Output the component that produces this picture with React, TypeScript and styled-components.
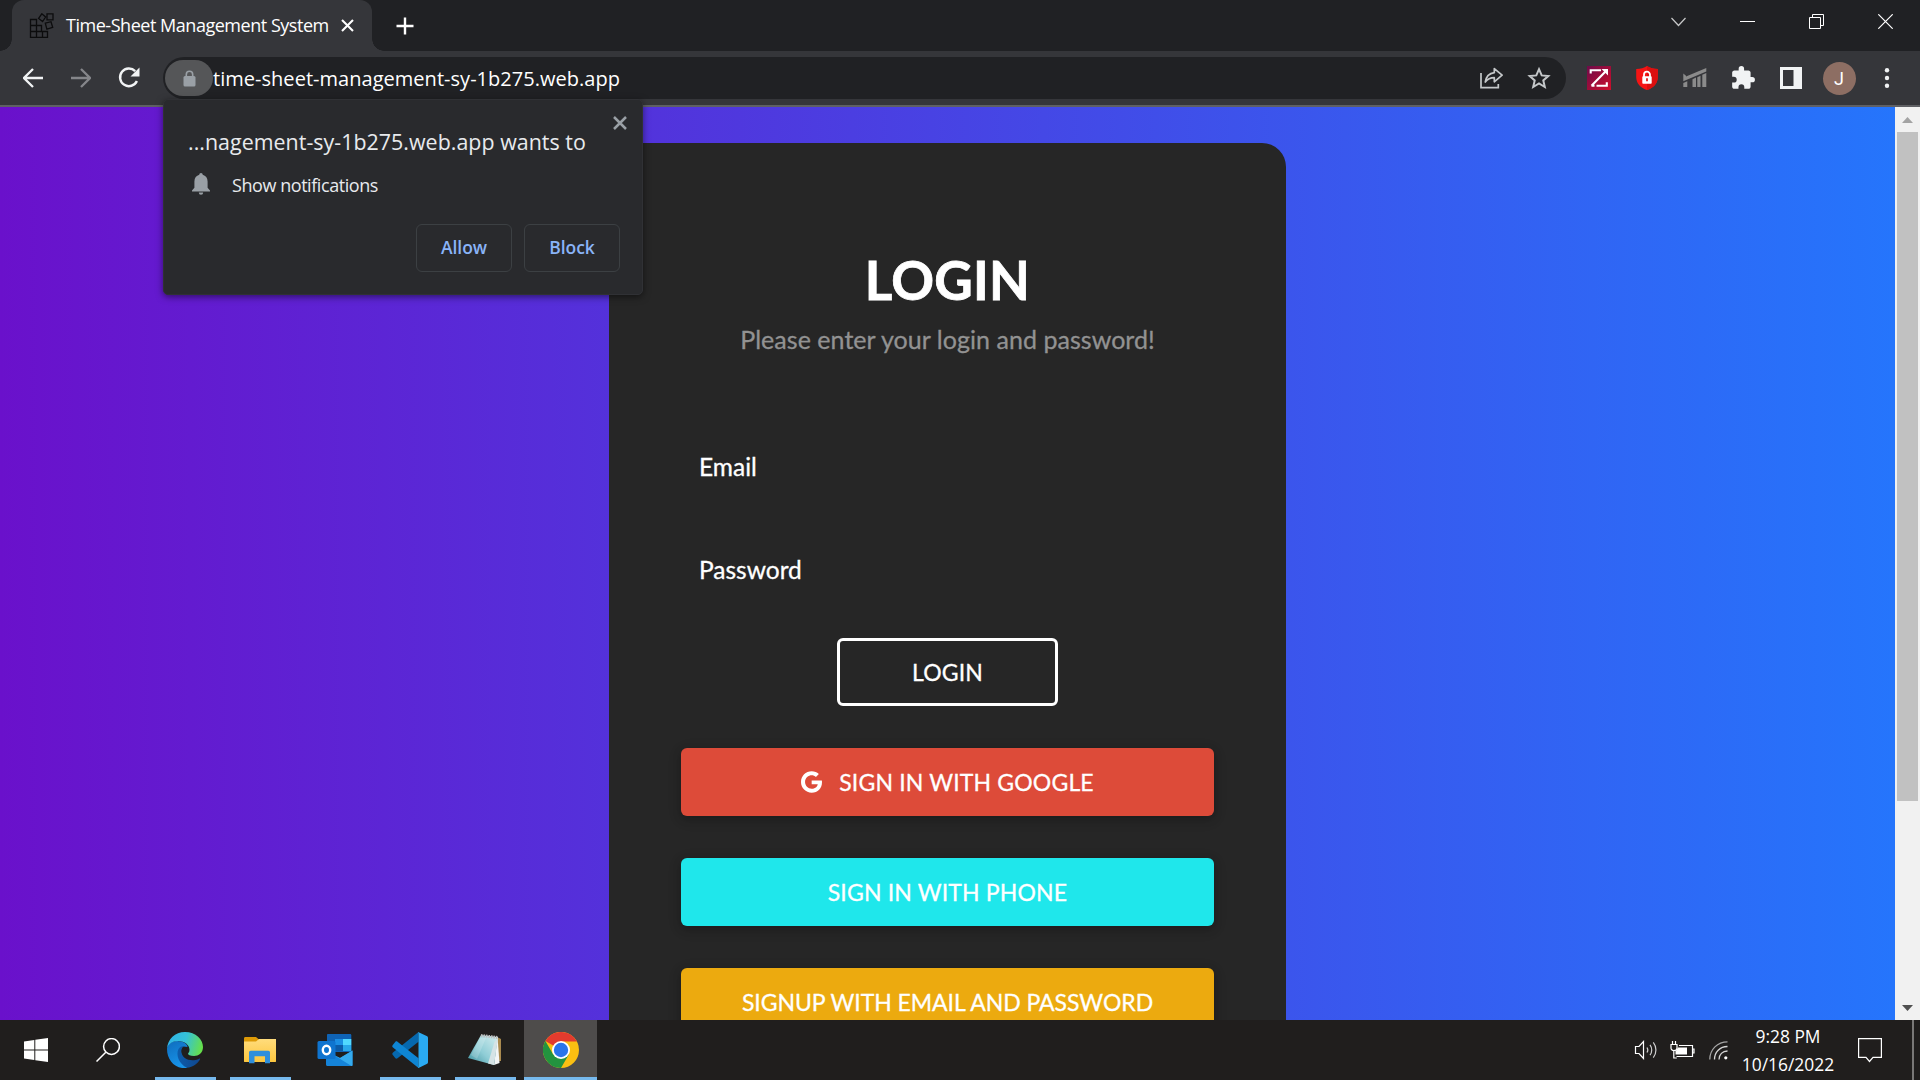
import React from 'react';
import styled, { createGlobalStyle } from 'styled-components';

const ui = '"Segoe UI", "Open Sans", "Noto Sans", sans-serif';
const comic = '"Comic Sans MS", Lato, "Open Sans", sans-serif';

const Global = createGlobalStyle`
  * { box-sizing: border-box; }
  html, body { margin: 0; padding: 0; overflow: hidden; background: #202124; }
  svg { display: block; flex: none; }
  button { margin: 0; padding: 0; font: inherit; }
`;

const Screen = styled.div`
  position: relative;
  display: flex;
  flex-direction: column;
  width: 1920px;
  height: 1080px;
  overflow: hidden;
  font-family: ${ui};
`;

/* ---------- browser frame ---------- */

const TabStrip = styled.header`
  display: flex;
  height: 51px;
  padding-left: 12px;
  background: #202124;
`;

const Tab = styled.div`
  position: relative;
  display: flex;
  align-items: center;
  width: 360px;
  height: 51px;
  padding: 0 17px;
  background: #35363a;
  border-radius: 12px 12px 0 0;
  &::before, &::after {
    content: '';
    position: absolute;
    bottom: 0;
    width: 12px;
    height: 12px;
  }
  &::before {
    left: -12px;
    background: radial-gradient(circle at 0 0, transparent 11.5px, #35363a 12px);
  }
  &::after {
    right: -12px;
    background: radial-gradient(circle at 100% 0, transparent 11.5px, #35363a 12px);
  }
`;

const TabTitle = styled.span`
  width: 275px;
  margin-left: 12px;
  padding-bottom: 1px;
  color: #fff;
  font-size: 18px;
  line-height: 24px;
  letter-spacing: -0.47px;
  white-space: nowrap;
`;

const NewTab = styled.div`
  display: flex;
  align-items: center;
  margin-left: 24px;
`;

const WindowControls = styled.div`
  display: flex;
  height: 43px;
  margin-left: auto;
`;

const WindowButton = styled.div`
  display: grid;
  place-items: center;
  width: 69px;
`;

const Toolbar = styled.div`
  display: flex;
  align-items: center;
  height: 56px;
  padding-left: 9px;
  background: #35363a;
  border-bottom: 2px solid #5f6064;
`;

const ToolSlot = styled.div`
  display: grid;
  place-items: center;
  width: 48px;
  height: 42px;
`;

const Omnibox = styled.div`
  display: flex;
  align-items: center;
  width: 1403px;
  height: 42px;
  margin: 0 9px 0 10px;
  padding: 0 3px 0 2px;
  background: #202124;
  border-radius: 21px;
`;

const SiteChip = styled.div`
  display: grid;
  place-items: center;
  width: 48px;
  height: 36px;
  border-radius: 18px;
  background: #555658;
`;

const Url = styled.span`
  flex: 1;
  padding-top: 1px;
  color: #fff;
  font-size: 20px;
  line-height: 26px;
  letter-spacing: 0.03px;
`;

const Avatar = styled.div`
  display: grid;
  place-items: center;
  width: 33px;
  height: 33px;
  border-radius: 50%;
  background: #8d6e63;
  color: #fff;
  font: 18px/33px Roboto, sans-serif;
`;

/* ---------- permission bubble ---------- */

const Bubble = styled.div`
  position: absolute;
  left: 163px;
  top: 99px;
  width: 480px;
  height: 196px;
  display: flex;
  flex-direction: column;
  padding: 29px 22px 22px 24px;
  background: #292a2d;
  border: 1px solid #303135;
  border-radius: 5px;
  box-shadow: 0 2px 7px rgba(0, 0, 0, 0.5);
`;

const BubbleClose = styled.div`
  position: absolute;
  top: 16px;
  right: 15px;
`;

const BubbleTitle = styled.div`
  color: #e8eaed;
  font-size: 21.4px;
  line-height: 26px;
  letter-spacing: 0.03px;
  white-space: nowrap;
`;

const BubbleRow = styled.div`
  display: flex;
  align-items: center;
  gap: 22px;
  margin-top: 16px;
  padding-left: 4px;
  color: #e8eaed;
  font-size: 18px;
  line-height: 24px;
  letter-spacing: -0.44px;
  & > span {
    padding-top: 2px;
  }
`;

const BubbleActions = styled.div`
  display: flex;
  justify-content: flex-end;
  gap: 12px;
  margin-top: auto;
`;

const BubbleButton = styled.button`
  width: 96px;
  height: 48px;
  padding-bottom: 2px;
  background: transparent;
  border: 1px solid #3c4043;
  border-radius: 6px;
  color: #8ab4f8;
  font-family: ${ui};
  font-size: 17.5px;
  font-weight: 600;
  letter-spacing: -0.1px;
`;

/* ---------- page ---------- */

const Viewport = styled.main`
  display: flex;
  height: 913px;
`;

const Page = styled.div`
  flex: 1;
  display: flex;
  justify-content: center;
  padding-top: 36px;
  overflow: hidden;
  background: linear-gradient(to right, #6a11cb, #2575fc);
  font-family: ${comic};
`;

const Card = styled.section`
  display: flex;
  flex-direction: column;
  align-items: center;
  flex: none;
  width: 677px;
  height: 1100px;
  padding: 105px 72px 0;
  background: #262626;
  border-radius: 24px;
  color: #fff;
  -webkit-text-stroke: 0.3px;
`;

const Title = styled.h2`
  margin: 0;
  font-size: 53px;
  line-height: 64px;
  font-weight: 700;
  letter-spacing: 0.3px;
  -webkit-text-stroke: 0.8px;
`;

const Hint = styled.p`
  margin: 11px 0 0;
  color: #929292;
  font-size: 25px;
  line-height: 32px;
  letter-spacing: 0.04px;
`;

const Field = styled.label<{ $gap: number }>`
  align-self: stretch;
  margin-top: ${(p) => p.$gap}px;
  padding-left: 18px;
  font-size: 24.5px;
  line-height: 32px;
`;

const Button = styled.button<{ $tone?: string }>`
  display: flex;
  align-items: center;
  justify-content: center;
  gap: 17px;
  flex: none;
  width: ${(p) => (p.$tone ? '533px' : '221px')};
  height: 68px;
  margin-top: 42px;
  background: ${(p) => p.$tone ?? 'transparent'};
  border: ${(p) => (p.$tone ? 'none' : '3px solid #fff')};
  border-radius: 6px;
  box-shadow: ${(p) => (p.$tone ? '0 3px 8px rgba(0,0,0,.2), 0 3px 15px rgba(0,0,0,.1)' : 'none')};
  color: #fff;
  font-family: ${comic};
  font-size: 23px;
  line-height: 32px;
  letter-spacing: ${(p) => (p.$tone === '#ecaa0f' ? '-0.05px' : '0.16px')};
  -webkit-text-stroke: 0.3px;
  white-space: nowrap;
`;

const LoginButton = styled(Button)`
  margin-top: 52px;
`;

const Scrollbar = styled.div`
  display: flex;
  flex-direction: column;
  align-items: center;
  width: 25px;
  background: #f1f1f1;
`;

const ScrollArrow = styled.div`
  display: grid;
  place-items: center;
  height: 25px;
`;

const Thumb = styled.div`
  width: 21px;
  height: 669px;
  margin-bottom: auto;
  background: #c1c1c1;
`;

/* ---------- taskbar ---------- */

const Taskbar = styled.footer`
  display: flex;
  height: 60px;
  background: #201e1d;
  color: #fff;
`;

const StartSlot = styled.div`
  display: grid;
  place-items: center;
  width: 72px;
`;

const Apps = styled.div`
  display: flex;
  gap: 2px;
  margin-left: 5px;
`;

const AppSlot = styled.div<{ $open?: boolean; $active?: boolean }>`
  display: flex;
  flex-direction: column;
  align-items: center;
  justify-content: space-between;
  width: 73px;
  padding-top: 12px;
  background: ${(p) => (p.$active ? '#4e4c4b' : 'transparent')};
  & > svg {
    margin-right: ${(p) => (p.$active ? '0' : '1px')};
  }
  &::after {
    content: '';
    width: ${(p) => (p.$active ? '73px' : '61px')};
    height: 3px;
    background: ${(p) => (p.$open || p.$active ? '#76b9ed' : 'transparent')};
  }
`;

const Tray = styled.div`
  display: flex;
  margin-left: auto;
`;

const TraySlot = styled.div<{ $w: number }>`
  display: grid;
  place-items: center;
  width: ${(p) => p.$w}px;
`;

const Clock = styled.div`
  display: flex;
  flex-direction: column;
  align-items: center;
  width: 103px;
  padding: 2px 1px 0 0;
  font-size: 17.4px;
  line-height: 28px;
`;

const ShowDesktop = styled.div`
  width: 8px;
  margin-left: 12px;
  border-left: 2px solid #797877;
`;

/* ---------- icons ---------- */

const Favicon = () => (
  <svg width="25" height="25" viewBox="0 0 25 25" fill="none" stroke="#0c0c0d" strokeWidth="1.3">
    <path d="M1.500 6.500h6v6h5v6h6v6h-17zM1.500 12.500h6v12M1.500 18.500h12v6" />
    <path d="M12.800.8l3.800 3.200-3 4.600-4-3.200zM18 .9h6v6h-6zM16.300 10.200l5.700-1.500 1.700 5.600-5.800 1.800z" />
  </svg>
);
const TabClose = () => (
  <svg width="13" height="13" viewBox="0 0 13 13" stroke="#fff" strokeWidth="2.1">
    <path d="M1 1l11 11M12 1L1 12" />
  </svg>
);
const Plus = () => (
  <svg width="18" height="18" viewBox="0 0 18 18" stroke="#fff" strokeWidth="2.4">
    <path d="M9 .5v17M.5 9h17" />
  </svg>
);
const ChevronDown = () => (
  <svg width="15" height="15" viewBox="0 0 15 15" fill="none" stroke="#c8c9ca" strokeWidth="1.2">
    <path d="M.5 4L7.5 11.500L14.5 4" />
  </svg>
);
const Minimize = () => (
  <svg width="15" height="15" viewBox="0 0 15 15">
    <path d="M0 7h15v1H0z" fill="#fff" />
  </svg>
);
const Restore = () => (
  <svg width="15" height="15" viewBox="0 0 15 15" fill="none" stroke="#fff">
    <path d="M.5 3.5h11v11H.5zM3.5 3.5v-3h11v11h-3" />
  </svg>
);
const Close = () => (
  <svg width="15" height="15" viewBox="0 0 15 15" stroke="#fff" strokeWidth="1.2">
    <path d="M.3.3l14.4 14.4M14.7.3L.3 14.7" />
  </svg>
);
const Arrow = ({ color, flip }: { color: string; flip?: boolean }) => (
  <svg width="20" height="20" viewBox="0 0 20 20" fill="none" stroke={color} strokeWidth="2.3">
    <path d={flip ? 'M0 10h18M10 1l9 9-9 9' : 'M20 10H2M10 1l-9 9 9 9'} />
  </svg>
);
const Reload = () => (
  <svg width="22" height="22" viewBox="0 0 22 22" fill="none">
    <path d="M17.2 4.2A8.8 8.8 0 1 0 18.9 14" stroke="#f1f3f4" strokeWidth="2.4" />
    <path d="M21.5 .5v9h-9z" fill="#f1f3f4" />
  </svg>
);
const Lock = () => (
  <svg width="13" height="17" viewBox="0 0 13 17">
    <path d="M3.3 7V4.4a3.2 3.2 0 0 1 6.4 0V7" fill="none" stroke="#9aa0a6" strokeWidth="1.6" />
    <rect x=".5" y="6" width="12" height="10.5" rx="1.5" fill="#9aa0a6" />
  </svg>
);
const Share = () => (
  <svg width="24" height="22" viewBox="-1 0 24 22" fill="none" stroke="#c4c7c9" strokeWidth="1.7">
    <path d="M1 6v14.7h17.3V17" />
    <path d="M14.3 1.6l7.800 6.600-7.800 6.600v-4.100c-4 0-6.700 1.300-9 4.300.8-5 3.800-8.600 9-9.300z" strokeLinejoin="round" />
  </svg>
);
const Star = () => (
  <svg width="24" height="24" viewBox="0 0 24 24" fill="none" stroke="#c4c7c9" strokeWidth="2">
    <path d="M12 3.200l2.700 6.200 6.600.6-5 4.400 1.500 6.600-5.800-3.500L6.200 21l1.500-6.600-5-4.400 6.600-.6z" />
  </svg>
);
const ZoomExt = () => (
  <svg width="24" height="24" viewBox="0 0 24 24">
    <defs>
      <linearGradient id="ze" x1="0" y1="0" x2="1" y2="1">
        <stop offset="0" stopColor="#6d0b4a" />
        <stop offset="1" stopColor="#cf0f2a" />
      </linearGradient>
    </defs>
    <path d="M0 0h24v24H0z" fill="url(#ze)" />
    <path d="M3.700 7.500V4.200H14M4.500 19.700L19 5M9.500 19.700h10.300v-3.500M4.500 19.700h3" fill="none" stroke="#fff" strokeWidth="2.100" />
    <path d="M14.500 3h6.500v6.500z" fill="#fff" />
  </svg>
);
const Shield = () => (
  <svg width="22" height="24" viewBox="0 0 22 24">
    <path d="M11 0c2.800 2 6.500 3 10.800 3v8c0 6.500-4.500 11-10.800 13C4.700 22 .2 17.500.2 11V3C4.500 3 8.200 2 11 0z" fill="#f51414" />
    <path d="M11 0c2.800 2 6.500 3 10.800 3v8c0 6.500-4.500 11-10.800 13z" fill="#dc0f0f" />
    <path d="M8 11V8.700a3 3 0 0 1 6 0V11" fill="none" stroke="#fff" strokeWidth="1.800" />
    <rect x="6.300" y="10.300" width="9.400" height="7.500" rx=".8" fill="#fff" />
    <path d="M11 12.300v3" stroke="#e01010" strokeWidth="1.700" />
  </svg>
);
const ChartExt = () => (
  <svg width="24" height="20" viewBox="0 0 24 20" fill="#8b8b8b">
    <path d="M.3 5.500L3 7.700v.9L23.300 0v3.600L.3 13.300z" />
    <path d="M.3 15l4-1.800V19h-4zM9.500 11.200l3.500-1.600V19H9.500zM14.300 9.200l3.200-1.500V19h-3.200zM19.300 6.800L23.300 5v14h-4z" />
  </svg>
);
const Puzzle = () => (
  <svg width="26" height="26" viewBox="0 0 24 24" fill="#f1f3f4">
    <path d="M20.500 11H19V7c0-1.100-.9-2-2-2h-4V3.500a2.500 2.500 0 0 0-5 0V5H4c-1.100 0-2 .9-2 2v3.800h1.500a2.700 2.700 0 0 1 0 5.400H2V20c0 1.100.9 2 2 2h3.800v-1.500a2.700 2.700 0 0 1 5.400 0V22H17c1.100 0 2-.9 2-2v-4h1.500a2.500 2.500 0 0 0 0-5z" />
  </svg>
);
const SidePanel = () => (
  <svg width="22" height="22" viewBox="0 0 22 22">
    <path fillRule="evenodd" d="M0 0h22v22H0zM3 3v16h10.500V3z" fill="#f1f3f4" />
  </svg>
);
const Dots = () => (
  <svg width="6" height="20" viewBox="0 0 6 20" fill="#f1f3f4">
    <circle cx="3" cy="2.200" r="2.200" />
    <circle cx="3" cy="10" r="2.200" />
    <circle cx="3" cy="17.800" r="2.200" />
  </svg>
);
const BubbleX = () => (
  <svg width="14" height="14" viewBox="0 0 14 14" stroke="#9aa0a6" strokeWidth="2.500">
    <path d="M1 1l12 12M13 1L1 13" />
  </svg>
);
const Bell = () => (
  <svg width="18" height="22" viewBox="0 0 18 22" fill="#9aa0a6">
    <path d="M9 0c1 0 1.700.7 1.700 1.800C13.700 2.600 15.600 5 15.600 8.400v6.300L18 17.400v1H0v-1l2.400-2.700V8.400C2.400 5 4.300 2.600 7.300 1.800 7.300.7 8 0 9 0zM6.800 19.600h4.400a2.200 2.200 0 0 1-4.400 0z" />
  </svg>
);
const GoogleG = () => (
  <svg width="21" height="22" viewBox="0 0 488 496" fill="#fff">
    <path d="M488 253.800C488 395.300 391.100 496 248 496 110.800 496 0 385.200 0 248S110.800 0 248 0c66.800 0 123 24.500 166.300 64.900l-67.500 64.900C258.500 44.600 94.300 108.600 94.300 248c0 86.500 69.100 156.600 153.700 156.600 98.200 0 135-70.400 140.800-106.900H248v-85.300h236.100c2.300 12.700 3.900 24.900 3.900 41.400z" />
  </svg>
);
const Triangle = ({ up }: { up?: boolean }) => (
  <svg width="11" height="6" viewBox="0 0 11 6">
    <path d={up ? 'M0 6L5.500 0 11 6z' : 'M0 0h11L5.500 6z'} fill={up ? '#a3a3a3' : '#505050'} />
  </svg>
);
const Windows = () => (
  <svg width="24" height="24" viewBox="0 0 24 24" fill="#fff">
    <path d="M0 3.500L10.300 2v9.500H0zM11.300 1.800L24 0v11.500H11.300zM0 12.500h10.300V22L0 20.500zM11.300 12.500H24V24l-12.700-1.800z" />
  </svg>
);
const Search = () => (
  <svg width="24" height="24" viewBox="0 0 24 24" fill="none" stroke="#fff" strokeWidth="1.500">
    <circle cx="15.500" cy="8.500" r="7.900" />
    <path d="M9.800 14.200L.5 23.500" />
  </svg>
);
const Edge = () => (
  <svg width="36" height="36" viewBox="0 0 36 36">
    <defs>
      <linearGradient id="eg" x1="0" y1=".3" x2="1" y2=".5">
        <stop offset="0" stopColor="#2fb4e8" />
        <stop offset=".5" stopColor="#35c1d8" />
        <stop offset="1" stopColor="#66e04a" />
      </linearGradient>
      <linearGradient id="eb" x1="0" y1="0" x2=".4" y2="1">
        <stop offset="0" stopColor="#0f6cbd" />
        <stop offset="1" stopColor="#1793e8" />
      </linearGradient>
      <linearGradient id="ed" x1="0" y1="0" x2="1" y2="0">
        <stop offset="0" stopColor="#0d5cab" />
        <stop offset="1" stopColor="#10468c" />
      </linearGradient>
    </defs>
    <path d="M0 17C.3 13 4 9 10 9c7 0 10.500 3.500 10.500 6l-4-.5c-2 1-3 3.500-2.500 6.500L20 36C8 37.500 0 28 0 17z" fill="url(#eb)" />
    <path d="M11.500 17c-3 6 .5 15 8.500 18.800 6-.8 10.500-4 13-8.300.4-.8-.2-1.200-.9-.8C24 30.500 15 27 14.300 19.500c-.2-2.500 1-4.700 2.700-5.500-2.300 0-4.300 1-5.500 3z" fill="url(#ed)" />
    <path d="M0 17C.5 7 8 0 18 0c11 0 18 7.500 18 15 0 6-4.500 9-9 9-4 0-6-1.300-6-2.300 0-.8 1.500-1.200 1.500-4C22.500 13 17.500 9 11.500 9 5 9 .8 12.500 0 17z" fill="url(#eg)" />
  </svg>
);
const Explorer = () => (
  <svg width="32" height="36" viewBox="0 0 32 36">
    <defs>
      <linearGradient id="fx" x1="0" y1="0" x2="0" y2="1">
        <stop offset="0" stopColor="#ffdc7c" />
        <stop offset="1" stopColor="#fcc63e" />
      </linearGradient>
    </defs>
    <path d="M0 6.500C0 5.500.5 5 1.500 5H12l3 2.500V12H0z" fill="#dd9a07" />
    <path d="M0 9.500h12L15 7h17v22.500c0 .3-.2.500-.500.500H.5c-.3 0-.5-.2-.5-.500z" fill="url(#fx)" />
    <path d="M5 31.300V20.500c0-1 .7-1.700 1.700-1.700h17.600c1 0 1.700.7 1.700 1.700v10.800h-5v-7H10.500v7z" fill="#2f8fdc" />
  </svg>
);
const Outlook = () => (
  <svg width="36" height="36" viewBox="0 0 36 36">
    <path d="M11 2h22c.8 0 1.300.5 1.300 1.300V20H10V3.300C10 2.500 10.300 2 11 2z" fill="#0f63b5" />
    <path d="M18 7h8v6h-8z" fill="#1b8ee3" />
    <path d="M26 7h8.300v6H26z" fill="#50d9ff" />
    <path d="M18 13h8v6h-8z" fill="#0b5ba8" />
    <path d="M26 13h8.300v6H26z" fill="#28a8ea" />
    <path d="M9 19l14 7 12.500-7.500V33c0 .6-.4 1-1 1h-24c-.9 0-1.500-.6-1.500-1.500z" fill="#1583d8" />
    <path d="M35.500 18.500V33c0 .6-.4 1-1 1L16 22.500l7 3.500z" fill="#35abee" />
    <rect x=".5" y="9" width="18" height="18" rx="1.500" fill="#0f74cf" />
    <ellipse cx="9.500" cy="18" rx="3.700" ry="4.200" fill="none" stroke="#fff" strokeWidth="2.400" />
  </svg>
);
const VsCode = () => (
  <svg width="36" height="36" viewBox="0 0 36 36">
    <path d="M1 23.200c-1-1-.9-2 0-2.800L26.500 0v9.800L5.500 26.300c-.6.500-1.500.5-2.100 0z" fill="#0668ae" />
    <path d="M1 12.800c-1 1-.9 2 0 2.800L26.500 36v-9.800L5.500 9.700c-.6-.5-1.500-.5-2.100 0z" fill="#0e85d3" />
    <path d="M26 0l8.700 4c.8.400 1.300 1.100 1.300 2v24c0 .9-.5 1.600-1.300 2L26.500 36c-.6-.5-.5-1 0-1.500V1.500z" fill="#2aaaf2" />
  </svg>
);
const Notepad = () => (
  <svg width="34" height="36" viewBox="0 0 34 36">
    <defs>
      <linearGradient id="np" x1="0" y1="1" x2="1" y2="0">
        <stop offset="0" stopColor="#3a8f9c" />
        <stop offset=".45" stopColor="#8fcdd6" />
        <stop offset="1" stopColor="#d5eef0" />
      </linearGradient>
    </defs>
    <path d="M29 5l4 2v22h-3z" fill="#a98a4f" />
    <path d="M29.500 5L26 33l5.500-2z" fill="#f2f5f5" />
    <path d="M13 3l17 2-4 28L0 26z" fill="url(#np)" />
    <path d="M12 6L3 23l6 4L18 6z" fill="#fff" opacity=".18" />
    <path d="M26.500 10L20 31.500l6 1.500L29.800 6z" fill="#d5e3e5" />
    <path d="M13 3.500l17 2" stroke="#bdbdbd" strokeWidth="3" strokeDasharray="1.500 1" />
  </svg>
);
const Chrome = () => (
  <svg width="36" height="36" viewBox="0 0 36 36">
    <circle cx="18" cy="18" r="18" fill="#fbbf12" />
    <path d="M18 18L2.400 9A18 18 0 0 1 33.600 9H18z" fill="#e33b2e" />
    <path d="M2.400 9a18 18 0 0 0 15.600 27l7.800-13.500L10.200 22.500z" fill="#23933f" />
    <path d="M18 9h15.600" stroke="#e33b2e" />
    <circle cx="18" cy="18" r="9" fill="#fff" />
    <circle cx="18" cy="18" r="7.200" fill="#2a74ea" />
  </svg>
);
const Speaker = () => (
  <svg width="24" height="20" viewBox="0 0 24 20" fill="none" stroke="#fff" strokeWidth="1.200">
    <path d="M1.500 6.500h3.500L9.500 1.500v17L5 13.500H1.500z" />
    <path d="M13 7.500c1 1.500 1 3.500 0 5M16 4.800c2.300 3 2.300 7.400 0 10.400M19.300 2.300c3.500 4.500 3.500 11 0 15.400" stroke="#d0d0d0" />
  </svg>
);
const Battery = () => (
  <svg width="25" height="18" viewBox="0 0 25 18" fill="none" stroke="#fff" strokeWidth="1.200">
    <path d="M9 4.500h13.500v11H6.500M22.500 8h1.500v4h-1.500M3.800 10v7h3" />
    <path d="M8 6.500h9v7H5.500v-3z" fill="#fff" stroke="none" />
    <path d="M1 3.500h6v3.500c0 1.500-1 2.500-3 2.500s-3-1-3-2.500zM2.500 0v3.500M5.500 0v3.500" fill="#201e1d" />
  </svg>
);
const Wifi = () => (
  <svg width="19" height="19" viewBox="0 0 19 19" fill="none" stroke="#d5d5d5" strokeWidth="1.300">
    <path d="M.8 18.500C.8 8.500 8.500.8 18.500.8" stroke="#a5a5a5" />
    <path d="M5.500 18.500c0-7.500 5.500-13 13-13M10 18.500c0-5 3.500-8.500 8.500-8.500" />
    <circle cx="16.800" cy="16.800" r="1.600" fill="#fff" stroke="none" />
  </svg>
);
const Notice = () => (
  <svg width="24" height="25" viewBox="0 0 24 25" fill="none" stroke="#fff" strokeWidth="1.200">
    <path d="M.6.6h22.800v18.800H15L11.500 23.500 8 19.400H.6z" />
  </svg>
);

export default function App() {
  return (
    <Screen>
      <Global />
      <TabStrip>
        <Tab>
          <Favicon />
          <TabTitle>Time-Sheet Management System</TabTitle>
          <TabClose />
        </Tab>
        <NewTab><Plus /></NewTab>
        <WindowControls>
          <WindowButton><ChevronDown /></WindowButton>
          <WindowButton><Minimize /></WindowButton>
          <WindowButton><Restore /></WindowButton>
          <WindowButton><Close /></WindowButton>
        </WindowControls>
      </TabStrip>
      <Toolbar>
        <ToolSlot><Arrow color="#f1f3f4" /></ToolSlot>
        <ToolSlot><Arrow color="#85868a" flip /></ToolSlot>
        <ToolSlot><Reload /></ToolSlot>
        <Omnibox>
          <SiteChip><Lock /></SiteChip>
          <Url>time-sheet-management-sy-1b275.web.app</Url>
          <ToolSlot><Share /></ToolSlot>
          <ToolSlot><Star /></ToolSlot>
        </Omnibox>
        <ToolSlot><ZoomExt /></ToolSlot>
        <ToolSlot><Shield /></ToolSlot>
        <ToolSlot><ChartExt /></ToolSlot>
        <ToolSlot><Puzzle /></ToolSlot>
        <ToolSlot><SidePanel /></ToolSlot>
        <ToolSlot><Avatar>J</Avatar></ToolSlot>
        <ToolSlot><Dots /></ToolSlot>
      </Toolbar>
      <Viewport>
        <Page>
          <Card>
            <Title>LOGIN</Title>
            <Hint>Please enter your login and password!</Hint>
            <Field $gap={96}>Email</Field>
            <Field $gap={71}>Password</Field>
            <LoginButton>LOGIN</LoginButton>
            <Button $tone="#dd4b39"><GoogleG />SIGN IN WITH GOOGLE</Button>
            <Button $tone="#1fe7eb">SIGN IN WITH PHONE</Button>
            <Button $tone="#ecaa0f">SIGNUP WITH EMAIL AND PASSWORD</Button>
          </Card>
        </Page>
        <Scrollbar>
          <ScrollArrow><Triangle up /></ScrollArrow>
          <Thumb />
          <ScrollArrow><Triangle /></ScrollArrow>
        </Scrollbar>
      </Viewport>
      <Taskbar>
        <StartSlot><Windows /></StartSlot>
        <StartSlot><Search /></StartSlot>
        <Apps>
          <AppSlot $open><Edge /></AppSlot>
          <AppSlot $open><Explorer /></AppSlot>
          <AppSlot><Outlook /></AppSlot>
          <AppSlot $open><VsCode /></AppSlot>
          <AppSlot $open><Notepad /></AppSlot>
          <AppSlot $active><Chrome /></AppSlot>
        </Apps>
        <Tray>
          <TraySlot $w={36}><Speaker /></TraySlot>
          <TraySlot $w={36}><Battery /></TraySlot>
          <TraySlot $w={37}><Wifi /></TraySlot>
          <Clock><span>9:28 PM</span><span>10/16/2022</span></Clock>
          <TraySlot $w={60}><Notice /></TraySlot>
          <ShowDesktop />
        </Tray>
      </Taskbar>
      <Bubble>
        <BubbleClose><BubbleX /></BubbleClose>
        <BubbleTitle>...nagement-sy-1b275.web.app wants to</BubbleTitle>
        <BubbleRow><Bell /><span>Show notifications</span></BubbleRow>
        <BubbleActions>
          <BubbleButton>Allow</BubbleButton>
          <BubbleButton>Block</BubbleButton>
        </BubbleActions>
      </Bubble>
    </Screen>
  );
}
